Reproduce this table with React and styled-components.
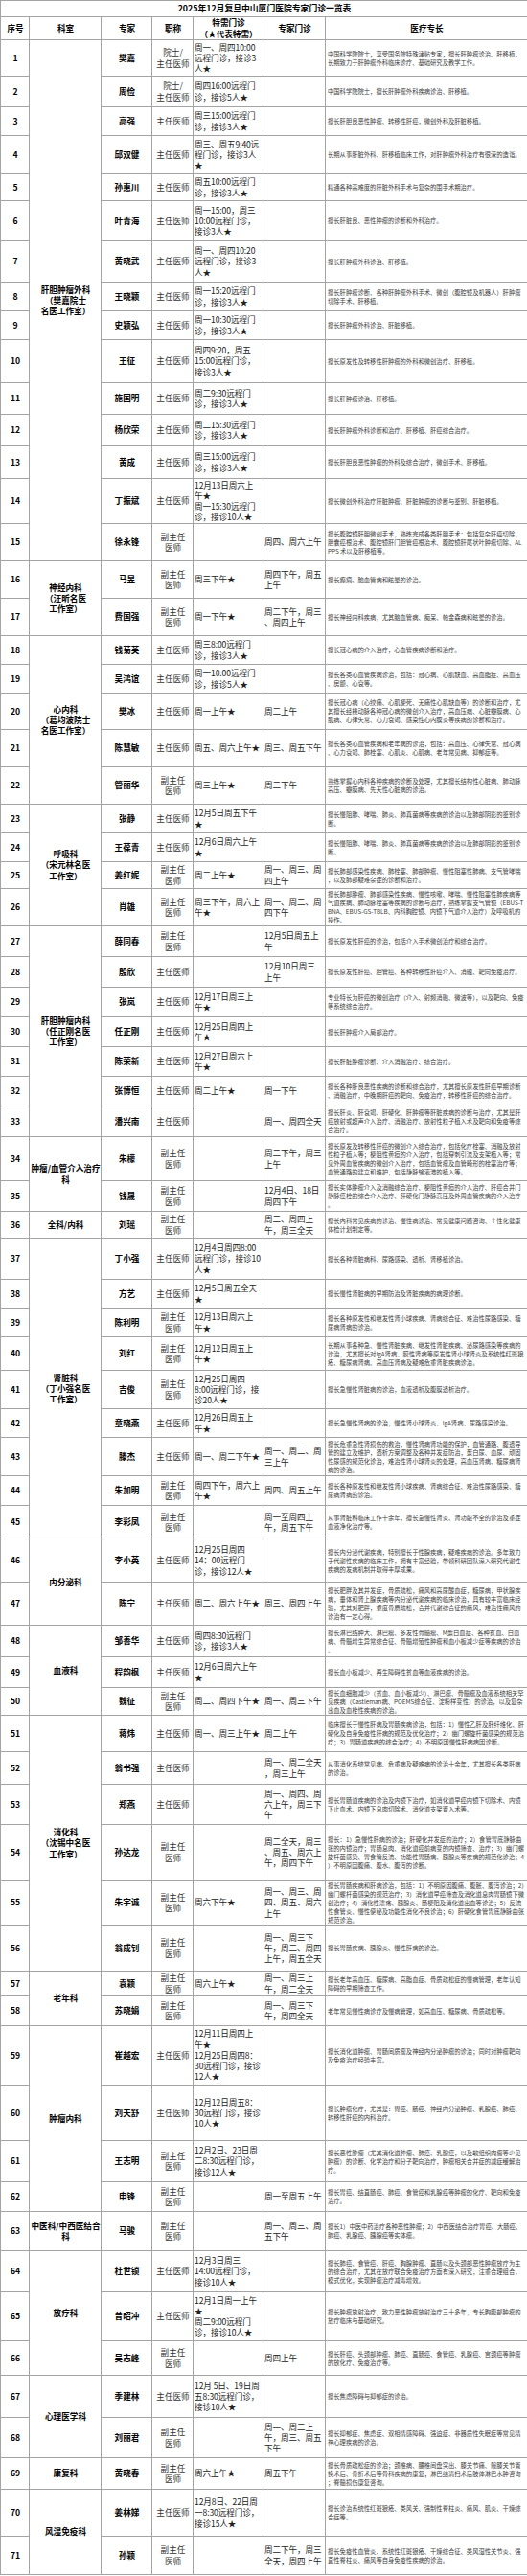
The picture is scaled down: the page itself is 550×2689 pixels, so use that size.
import styled, { createGlobalStyle } from "styled-components";

const Z = "主任医师";
const F = "副主任\n医师";
const Y = "院士/\n主任医师";

// [专家, 职称, 特需门诊, 专家门诊, 医疗专长, 行高]
const departments = [
  {
    name: "肝胆肿瘤外科\n（樊嘉院士\n名医工作室）",
    rows: [
      ["樊嘉", Y, "周一、周四10:00\n远程门诊，接诊3\n人★", "", "中国科学院院士，享受国务院特殊津贴专家，擅长肝肿瘤诊治、肝移植，长期致力于肝肿瘤外科临床诊疗、基础研究及教学工作。", 38],
      ["周俭", Y, "周四16:00远程门\n诊，接诊5人★", "", "中国科学院院士，擅长肝肿瘤外科疾病诊治、肝移植。", 32],
      ["高强", Z, "周三15:00远程门\n诊，接诊3人★", "", "擅长肝胆良恶性肿瘤、转移性肝癌，微创外科及肝脏移植。", 30],
      ["邱双健", Z, "周三、周五9:40远\n程门诊，接诊3人\n★", "", "长期从事肝脏外科、肝移植临床工作，对肝肿瘤外科治疗有很深的造诣。", 40],
      ["孙惠川", Z, "周五10:00远程门\n诊，接诊3人★", "", "精通各种高难度的肝脏外科手术与复杂的围手术期治疗。", 28],
      ["叶青海", Z, "周一15:00，周三\n10:00远程门诊，\n接诊3人★", "", "擅长肝脏良、恶性肿瘤的诊断和外科治疗。", 42],
      ["黄晓武", Z, "周一、周四10:20\n远程门诊，接诊3\n人★", "", "擅长肝肿瘤外科诊治、肝移植。", 43],
      ["王晓颖", Z, "周一15:20远程门\n诊，接诊3人★", "", "擅长肝肿瘤诊断、各种肝肿瘤外科手术、微创（腹腔镜及机器人）肝肿瘤切除手术、肝移植。", 30],
      ["史颖弘", Z, "周一10:30远程门\n诊，接诊3人★", "", "擅长肝肿瘤外科诊治、肝脏移植。", 30],
      ["王征", Z, "周四9:20，周五\n15:00远程门诊，\n接诊3人★", "", "擅长原发性及转移性肝肿瘤的外科和微创治疗、肝移植。", 45],
      ["施国明", Z, "周二9:30远程门\n诊，接诊3人★", "", "擅长肝肿瘤诊治、肝移植。", 33],
      ["杨欣荣", Z, "周二15:30远程门\n诊，接诊3人★", "", "擅长肝肿瘤外科诊断和治疗、肝移植、肝癌综合治疗。", 33],
      ["黄成", Z, "周三15:00远程门\n诊，接诊3人★", "", "擅长肝胆良恶性肿瘤的外科及综合治疗，微创手术、肝移植。", 34],
      ["丁振斌", Z, "12月13日周六上\n午★\n周一15:30远程门\n诊，接诊10人★", "", "擅长微创外科治疗肝脏肿瘤、肝脏肿瘤的诊断与鉴别、肝脏移植。", 47],
      ["徐永锋", F, "", "周四、周六上午", "擅长腹腔镜肝胆微创手术，熟练完成各类肝胆手术：包括复杂肝癌切除、胆囊癌根治术、腹腔镜肝门胆管癌根治术、腹腔镜肝尾状叶肿瘤切除、ALPPS 术以及肝移植等。", 39],
    ],
  },
  {
    name: "神经内科\n（汪昕名医\n工作室）",
    rows: [
      ["马昱", F, "周三下午★", "周四下午，周五\n上午", "擅长癫痫、脑血管病和眩晕的诊治。", 39],
      ["费国强", F, "周一下午★", "周二下午，周三\n、周四上午", "擅长神经内科疾病，尤其脑血管病、痴呆、帕金森病和眩晕的诊治。", 39],
    ],
  },
  {
    name: "心内科\n（葛均波院士\n名医工作室）",
    rows: [
      ["钱菊英", Z, "周三8:00远程门\n诊，接诊3人★", "", "擅长冠心病的介入治疗，心血管疾病诊断和治疗。", 30],
      ["吴鸿谊", Z, "周一10:00远程门\n诊，接诊5人★", "", "擅长各类心血管疾病诊治，包括：冠心病、心肌缺血、高血脂症、高血压、房颤、心衰等。", 30],
      ["樊冰", Z, "周一上午★", "周二上午", "擅长冠心病（心绞痛、心肌梗死、无痛性心肌缺血等）的诊断和治疗，尤其擅长经桡动脉各种冠心病的微创介入治疗，高血压病、心脏瓣膜病、心肌病、心律失常、心力衰竭、感染性心内膜炎等疾病的诊断和治疗。", 38],
      ["陈慧敏", Z, "周五、周六上午★", "周三、周五下午", "擅长各类心血管疾病和老年病的诊治，包括：高血压、心律失常、冠心病、心力衰竭、肺栓塞、心肌炎、心肌病、老年常见病、抑郁症等。", 39],
      ["管丽华", F, "周三上午★", "周二下午", "熟练掌握心内科各种疾病的诊断及处理，尤其擅长结构性心脏病、肺动脉高压、瓣膜病、先天性心脏病的诊治。", 39],
    ],
  },
  {
    name: "呼吸科\n（宋元林名医\n工作室）",
    rows: [
      ["张静", Z, "12月5日周五下午\n★", "", "擅长慢阻肺、哮喘、肺炎、肺真菌病等疾病的诊治以及肺部阴影的鉴别诊断。", 30],
      ["王葆青", Z, "12月6日周六上午\n★", "", "擅长慢阻肺、哮喘、肺炎、肺真菌病等疾病的诊治以及肺部阴影的鉴别诊断。", 30],
      ["姜红妮", F, "周二上午★", "周一、周三、周\n四上午", "擅长肺部感染性疾病、肺栓塞、肺部肿瘤、慢性阻塞性肺病、支气管哮喘，以及肺部疑难杂症的诊断和治疗。", 28],
      ["肖雄", F, "周三下午，周六上\n午★", "周一、周二、周\n四下午", "擅长肺部肿瘤、肺部感染性疾病、慢性咳嗽、哮喘、慢性阻塞性肺疾病等气道疾病、肺动脉栓塞等疾病的诊断与治疗，熟练掌握支气管镜（EBUS-TBNA、EBUS-GS-TBLB、内科胸腔镜、内镜下气道介入治疗）及呼吸机的操作。", 39],
    ],
  },
  {
    name: "肝胆肿瘤内科\n（任正刚名医\n工作室）",
    rows: [
      ["薛同春", F, "", "12月5日周五上\n午", "擅长原发性肝癌的诊治，包括介入手术微创治疗和综合治疗。", 32],
      ["殷欣", Z, "", "12月10日周三\n上午", "擅长原发性肝癌、胆管癌、各种转移性肝癌介入、消融、靶向免疫治疗。", 32],
      ["张岚", Z, "12月17日周三上\n午★", "", "专业特长为肝癌的微创治疗（介入、射频消融、微波等），以及靶向、免疫等系统综合治疗。", 31],
      ["任正刚", Z, "12月25日周四上\n午★", "", "擅长肝肿瘤介入局部治疗。", 31],
      ["陈荣新", Z, "12月27日周六上\n午★", "", "擅长肝脏肿瘤诊断、介入消融治疗、综合治疗。", 31],
      ["张博恒", Z, "周二上午★", "周一下午", "擅长各种肝良恶性疾病的诊断和综合治疗，尤其擅长原发性肝癌早期诊断、消融治疗，中晚期肝癌的靶向、免疫治疗，转移性肝癌的综合治疗。", 31],
      ["潘兴南", Z, "", "周一、周四全天", "擅长肝炎、肝衰竭、肝硬化、肝肿瘤等肝脏疾病的诊断与治疗，尤其是肝癌放射或超声介入治疗、消融治疗、放射性粒子植入术及靶向和免疫等综合治疗。", 32],
    ],
  },
  {
    name: "肿瘤/血管介入治疗\n科",
    rows: [
      ["朱檬", F, "", "周二下午，周三\n上午", "擅长原发及转移性肝癌的微创介入综合治疗，包括化疗栓塞、消融及放射性粒子植入等；梗阻性黄疸的介入治疗，包括穿刺引流及支架植入等；常见外周血管疾病的微创介入治疗，包括血管瘤及血管畸形的栓塞治疗等；血管通路的建立和维护，包括静脉输液港的植入等。", 46],
      ["钱晟", F, "", "12月4日、18日\n周四下午", "擅长实体肿瘤介入及消融综合治疗、梗阻性黄疸的介入治疗、肝癌合并门静脉癌栓的综合介入治疗、肝硬化门静脉高压及外周血管疾病的介入治疗。", 32],
    ],
  },
  {
    name: "全科/内科",
    rows: [
      ["刘瑶", F, "", "周二、周四上\n午，周三全天", "擅长内科常见疾病的诊治、慢性病诊治、常见健康问题咨询、个性化健康体检计划制定等。", 28],
    ],
  },
  {
    name: "肾脏科\n（丁小强名医\n工作室）",
    rows: [
      ["丁小强", Z, "12月4日周四8:00\n远程门诊，接诊10\n人★", "", "擅长各种肾脏病科、尿路感染、透析、肾移植诊治。", 43],
      ["方艺", Z, "12月5日周五全天\n★", "", "擅长慢性肾脏病的早期防治及肾脏疾病的病理诊断。", 30],
      ["陈利明", F, "12月13日周六上\n午★", "", "擅长各种原发性和继发性肾小球疾病、肾病综合征、难治性尿路感染、糖尿病肾病的诊治。", 30],
      ["刘红", F, "12月12日周五上\n午★", "", "长期从事各种急、慢性肾脏疾病、继发性肾脏疾病、泌尿路感染等疾病的诊治，尤其擅长对IgA肾病、膜性肾病等原发性肾小球肾炎及系统性红斑狼疮、糖尿病肾病、高血压肾病及疑难危重肾脏疾病诊治。", 35],
      ["吉俊", F, "12月25日周四\n8:00远程门诊，接\n诊20人★", "", "擅长急慢性肾脏病的诊治，血液透析及腹膜透析治疗。", 40],
      ["章晓燕", Z, "12月26日周五上\n午★", "", "擅长急慢性肾病的诊治，慢性肾小球肾炎、IgA肾病、尿路感染诊治。", 30],
      ["滕杰", Z, "周一、周二下午★", "周一、周二、周\n三上午", "擅长危重急性肾损伤的救治，慢性肾病肾功能的保护，血管通路、腹透导管的建立及维护，透析方案调整及各种并发症防治，蛋白尿、血尿、顽固性尿感的规范化诊治，难治性肾小球肾炎的处理，高血压肾病、糖尿病肾病的诊治。", 40],
      ["朱加明", F, "周四下午，周六上\n午★", "周四、周五上午", "擅长各种原发性和继发性肾小球疾病、肾病综合征、难治性尿路感染、糖尿病肾病的诊治。", 31],
      ["李彩凤", F, "", "周一至周四上\n午，周五下午", "从事肾脏科临床工作十余年，擅长急慢性肾炎、肾功能不全的诊治及重症血液净化治疗等。", 35],
    ],
  },
  {
    name: "内分泌科",
    rows: [
      ["李小英", Z, "12月25日周四\n14：00远程门\n诊，接诊12人★", "", "擅长内分泌代谢疾病，特别擅长于性腺疾病，疑难疾病的诊治。多年致力于代谢性疾病的临床工作，拥有丰富经验，带领科研团队深入研究代谢性疾病的发病机制并取得丰厚成果。", 45],
      ["陈宁", Z, "周二、周六上午★", "周三、周四上午", "擅长肥胖及其并发症，骨质疏松，痛风和高尿酸血症，糖尿病，甲状腺疾病，垂体和肾上腺疾病等内分泌代谢疾病的临床诊治，具有较丰富临床经验，尤其对肥胖，重度骨质疏松，合并代谢综合征的痛风，难治性痛风的诊治有一定心得。", 45],
    ],
  },
  {
    name: "血液科",
    rows: [
      ["邹善华", Z, "周四8:30远程门\n诊，接诊3人★", "", "擅长淋巴结肿大、淋巴瘤、多发性骨髓瘤、M蛋白血症、各种贫血、白血病、骨髓增生异常综合征、骨髓增殖性肿瘤和血小板减少症等疾病的诊治。", 33],
      ["程韵枫", Z, "12月6日周六上午\n★", "", "擅长血小板减少、再生障碍性贫血等血液疾病的诊治。", 32],
      ["魏征", F, "周二、周四下午★", "周一、周三下午", "擅长血细胞减少（贫血、血小板减少）、淋巴瘤、骨髓瘤及血液系统相关罕见疾病（Castleman病、POEMS综合征、淀粉样变性）的诊治，以及复杂出血及血栓性疾病的诊治。", 29],
    ],
  },
  {
    name: "消化科\n（沈锡中名医\n工作室）",
    rows: [
      ["蒋炜", Z, "周一、周三上午★", "周二上午", "临床擅长于慢性肝病及胃肠疾病诊治，包括：1）慢性乙肝及肝纤维化、肝硬化及自身免疫性肝病的规范及优化治疗；2）幽门螺旋杆菌感染的规范治疗；3）胃肠道疾病的综合治疗；4）不明原因慢性肝病病因诊断。", 38],
      ["翁书强", Z, "", "周一、周二全天\n，周三上午", "从事消化系统常见病、危重病及疑难病的诊治十余年，尤其擅长各类肝病的诊治。", 34],
      ["郑燕", Z, "", "周一、周四、周\n六上午，周三下\n午", "擅长胃肠道疾病的诊治及内镜下治疗，如消化道早癌内镜下切除术、内镜下止血术、内镜下息肉切除术、消化道支架置入术等。", 42],
      ["孙达龙", F, "", "周二全天，周三\n、周五、周六上\n午，周四下午", "擅长：1）急慢性肝病的诊治；肝硬化并发症的治疗；2）食管胃底静脉曲张的内镜治疗；胃肠息肉、消化道癌前病变的内镜筛查、治疗；3）幽门螺旋杆菌感染、胃食管反流、功能性胃肠病、胰腺炎等疾病的规范化诊治；4）不明原因腹痛、腹水、腹泻的诊断。", 58],
      ["朱宇诚", F, "周六下午★", "周一、周三、周\n四、周五、周六\n上午", "擅长胃肠疾病和肝病诊治，包括：1）不明原因腹痛、腹胀、腹泻诊治；2）幽门螺杆菌感染的规范治疗；3）消化道早癌筛查及消化道息肉胃肠镜下微创治疗；4）消化性溃疡、胰腺炎、肠梗阻及消化道出血等诊治；5）反流性食管炎、慢性便秘及功能性消化不良诊治；6）肝硬化食管胃底静脉曲张规范诊治。", 47],
      ["翁成钊", F, "", "周一、周三下\n午，周二、周四\n上午，周五全天", "擅长胃肠疾病、胰腺炎、慢性肝病的诊治。", 48],
    ],
  },
  {
    name: "老年科",
    rows: [
      ["袁颖", F, "周六上午★", "周一、周三上\n午，周二全天", "擅长老年高血压、糖尿病、高脂血症、骨质疏松症的慢病管理，老年认知障碍的早期筛查工作。", 26],
      ["苏晓娟", F, "", "周一、周三下\n午，周四全天", "老年常见慢性病诊疗及慢病管理，如高血压、糖尿病、骨质疏松等。", 31],
    ],
  },
  {
    name: "肿瘤内科",
    rows: [
      ["崔越宏", Z, "12月11日周四上\n午★\n12月25日周四8：\n30远程门诊，接诊\n12人★", "", "擅长消化道肿瘤、胃肠间质瘤及神经内分泌肿瘤的诊治；同时对肿瘤靶向及免疫治疗经验丰富。", 62],
      ["刘天舒", Z, "12月12日周五8：\n30远程门诊，接诊\n10人★", "", "擅长肿瘤化疗，尤其是：胃癌、肠癌、神经内分泌肿瘤、乳腺癌、肺癌、转移性肝癌的内科治疗。", 58],
      ["王志明", F, "12月2日、23日周\n二8:30远程门诊，\n接诊12人★", "", "擅长恶性肿瘤（尤其消化道肿瘤、肺癌、乳腺癌，以及软组织肉瘤等少见肿瘤）的诊断、化学治疗和分子靶向治疗，肿瘤相关合并症的减症缓解治疗。", 43],
      ["申锋", F, "", "周一至周五上午", "擅长胃癌、结直肠癌、肺癌、食管癌和乳腺癌等肿瘤的化疗、靶向和免疫治疗。", 31],
    ],
  },
  {
    name: "中医科/中西医结合\n科",
    rows: [
      ["马骏", F, "", "周一、周三、周\n五下午", "擅长1）中医中药治疗各种恶性肿瘤；2）中西医结合治疗胃癌、大肠癌、肺癌、乳腺癌、胰腺癌等实体瘤。", 41],
    ],
  },
  {
    name: "放疗科",
    rows: [
      ["杜世锁", Z, "12月3日周三\n14:00远程门诊，\n接诊10人★", "", "擅长肺癌、食管癌、肝癌、胸腺肿瘤、直肠以及头颈部恶性肿瘤放疗为主的综合治疗，尤其在放疗联合免疫治疗方面有深入研究，注重合理组合，模式优化，实现肿瘤治疗减毒增效。", 43],
      ["曾昭冲", Z, "12月1日周一上午\n★\n周二9:00远程门\n诊，接诊10人★", "", "擅长肿瘤放射治疗，致力恶性肿瘤放射治疗三十多年，专长胸腹部肿瘤的放疗临床与基础研究。", 51],
      ["吴志峰", F, "", "周四上午", "擅长肝癌、头颈部肿瘤、肺癌、直肠癌、食管癌、乳腺癌、宫颈癌等肿瘤的放化疗、免疫治疗等。", 36],
    ],
  },
  {
    name: "心理医学科",
    rows: [
      ["季建林", Z, "12月 5日、19日周\n五8:30远程门诊，\n接诊10人★", "", "擅长焦虑障碍与抑郁症的诊治。", 44],
      ["刘丽君", F, "", "周一、周二上\n午，周三、周五\n下午", "擅长抑郁症、焦虑症、双相情感障碍、强迫症、非器质性失眠症等常见精神心理疾病的诊治。", 42],
    ],
  },
  {
    name: "康复科",
    rows: [
      ["黄晓春", F, "周六上午★", "周五下午", "擅长骨质疏松症的诊治；颈椎病、腰椎间盘突出、膝关节痛、髋膝关节置换术后、骨折术后等骨科疾病的康复；淋巴结清扫术后肢体淋巴水肿咨询；脊髓损伤康复咨询。", 33],
    ],
  },
  {
    name: "风湿免疫科",
    rows: [
      ["姜林娣", Z, "12月8日、22日周\n一8:30远程门诊，\n接诊15人★", "", "擅长诊治系统性红斑狼疮、类风关、强制性脊柱炎、痛风、肌炎、干燥综合症等。", 49],
      ["孙颖", F, "", "周二下午，周三\n全天，周四上午", "擅长免疫性血管炎、系统性红斑狼疮、干燥综合征、类风湿性关节炎、强直性脊柱炎、痛风等自身免疫性疾病的诊治。", 40],
    ],
  },
];

const App = () => {
  let count = 0;

  return (
    <>
      <GlobalStyle />
      <Sheet>
        <colgroup>
          <Col $w={30} />
          <Col $w={75} />
          <Col $w={53} />
          <Col $w={43} />
          <Col $w={73} />
          <Col $w={65} />
          <Col $w={211} />
        </colgroup>
        <tbody>
          <Row $h={17}>
            <Title colSpan={7}>2025年12月复旦中山厦门医院专家门诊一览表</Title>
          </Row>
          <Row $h={24}>
            <Strong>序号</Strong>
            <Strong>科室</Strong>
            <Strong>专家</Strong>
            <Strong>职称</Strong>
            <Strong $mid>{"特需门诊\n（★代表特需）"}</Strong>
            <Strong>专家门诊</Strong>
            <Strong>医疗专长</Strong>
          </Row>
          {departments.map((dept) =>
            dept.rows.map(([name, title, vip, clinic, spec, h], i) => {
              count += 1;
              return (
                <Row key={count} $h={h}>
                  <Strong>{count}</Strong>
                  {i === 0 && <Strong rowSpan={dept.rows.length}>{dept.name}</Strong>}
                  <Strong>{name}</Strong>
                  <Centered>{title}</Centered>
                  <Plain $mid>{vip}</Plain>
                  <Plain>{clinic}</Plain>
                  <Spec>{spec}</Spec>
                </Row>
              );
            })
          )}
        </tbody>
      </Sheet>
    </>
  );
};

export default App;

const GlobalStyle = createGlobalStyle`
  body {
    margin: 0;
    background: #fff;
    font-family: "Noto Sans CJK SC", "Noto Sans", sans-serif;
  }
`;

const Sheet = styled.table`
  width: 550px;
  border-collapse: collapse;
  table-layout: fixed;
  color: #151515;
`;

const Col = styled.col`
  width: ${(p) => p.$w}px;
`;

const Row = styled.tr`
  height: ${(p) => p.$h}px;
`;

const Cell = styled.td`
  border: 1px solid #a4a4a4;
  ${(p) => p.$mid && "border-left-color: #bcbcbc; border-right-color: #bcbcbc;"}
  padding: 0 0 0 1px;
  vertical-align: middle;
  font-size: 8.6px;
  line-height: 11.2px;
  white-space: pre-line;
  overflow: hidden;
`;

const Strong = styled(Cell)`
  text-align: center;
  font-weight: 700;
  color: #000;
`;

const Title = styled(Strong)`
  font-size: 8.8px;
`;

const Centered = styled(Cell)`
  text-align: center;
  color: #333;
`;

const Plain = styled(Cell)`
  text-align: left;
  color: #222;
  white-space: pre;
  letter-spacing: -0.1px;
`;

const Spec = styled(Cell)`
  text-align: left;
  padding: 0 2px;
  font-size: 6.3px;
  line-height: 9px;
  line-break: anywhere;
  color: #3a3a3a;
`;
